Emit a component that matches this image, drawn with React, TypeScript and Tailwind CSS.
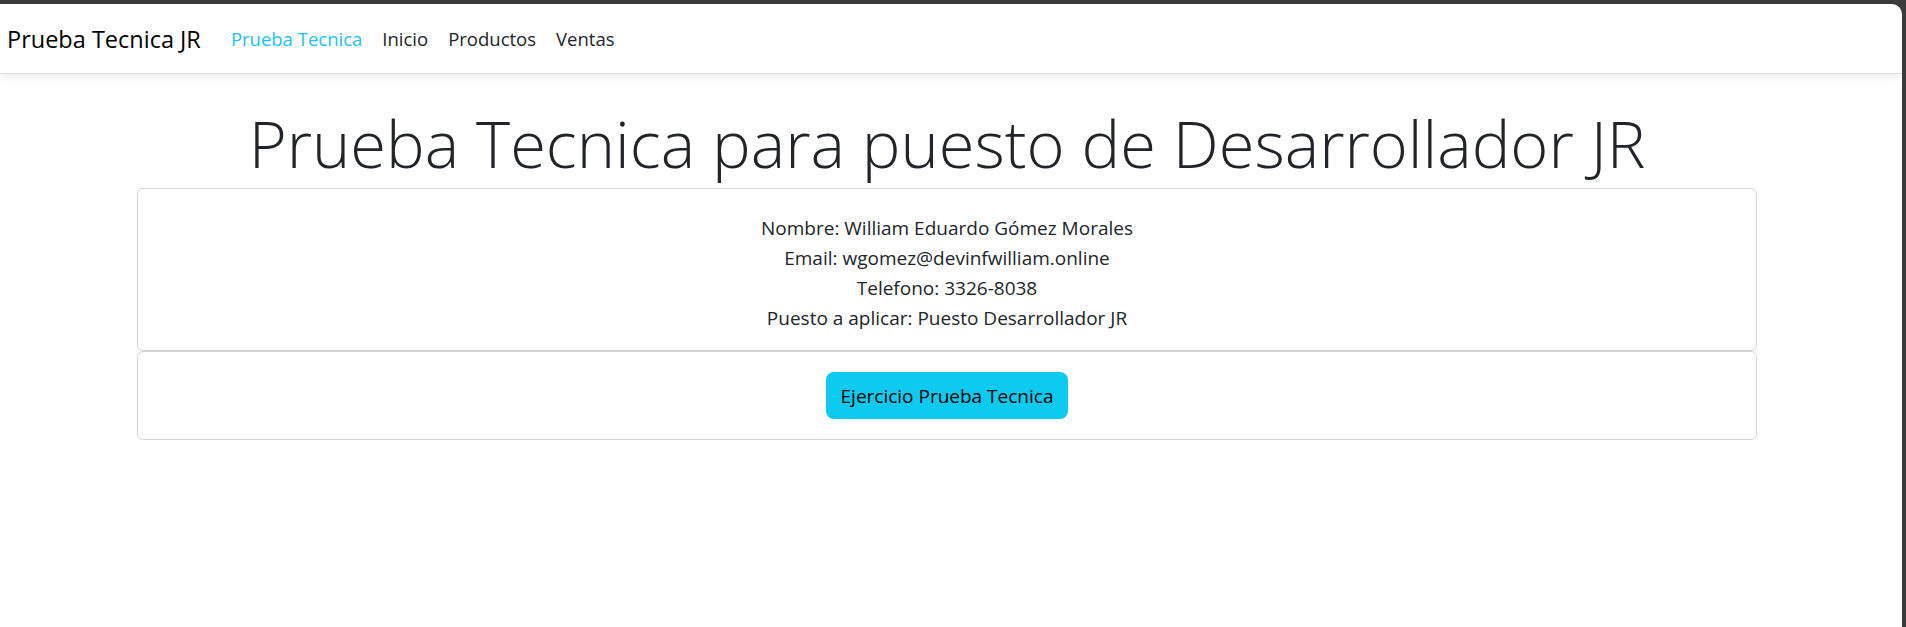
import React from "react";

const navLinks = [
  { text: "Prueba Tecnica", href: "#", active: true },
  { text: "Inicio", href: "#" },
  { text: "Productos", href: "#" },
  { text: "Ventas", href: "#" },
];

const datos = [
  "Nombre: William Eduardo Gómez Morales",
  "Email: wgomez@devinfwilliam.online",
  "Telefono: 3326-8038",
  "Puesto a aplicar: Puesto Desarrollador JR",
];

const App = () => {
  return (
    <div
      className="h-[627px] w-full bg-[#3b3b3b] pt-[4px] pr-[4px]"
      style={{ fontFamily: '"Open Sans", "Noto Sans", sans-serif' }}
    >
      <div className="h-full bg-white rounded-tr-[10px] overflow-hidden text-[#212529]">
        <nav className="h-[70px] flex items-center border-b border-[#dcdce2] shadow-[0_3px_10px_rgba(0,0,0,0.07)] rounded-tr-[10px]">
          <a href="#" className="pl-[7px] mr-[20px] text-[23.5px] text-black leading-[36px]">
            Prueba Tecnica JR
          </a>
          <div className="flex items-center">
            {navLinks.map((link) => (
              <a
                key={link.text}
                href={link.href}
                className={
                  link.active
                    ? "px-[10px] text-[18.5px] leading-[30px] text-[#1cc3ec]"
                    : "px-[10px] text-[18.5px] leading-[30px] text-[#212529]"
                }
              >
                {link.text}
              </a>
            ))}
          </div>
        </nav>

        <main className="pr-2 pt-[30px]">
          <h1 className="text-center text-[65px] font-light leading-[1.2] mb-[6px]">
            Prueba Tecnica para puesto de Desarrollador JR
          </h1>

          <div className="w-[1620px] mx-auto">
            <div className="border border-[#d4d4d4] rounded-[6px] pt-6 pb-[17px] text-center text-[19px] leading-[30px]">
              {datos.map((d) => (
                <p key={d}>{d}</p>
              ))}
            </div>
            <div className="border border-[#d4d4d4] rounded-[6px] pt-5 pb-5 flex justify-center">
              <button className="h-[47px] flex items-center bg-[#0dcaf0] text-black text-[19px] leading-[30px] px-[15px] rounded-[8px]">
                Ejercicio Prueba Tecnica
              </button>
            </div>
          </div>
        </main>
      </div>
    </div>
  );
};

export default App;
